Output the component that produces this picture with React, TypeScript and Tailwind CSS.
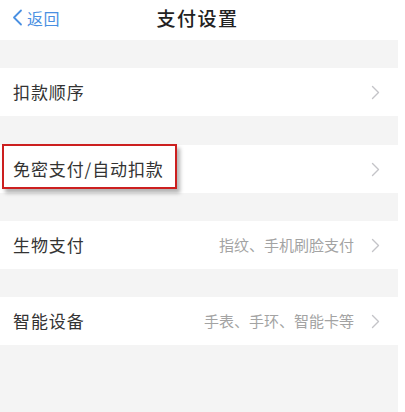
import { ReactNode } from 'react';

function Chevron() {
  return (
    <svg width="9" height="15" viewBox="0 0 9 15" fill="none" className="shrink-0">
      <path d="M1.5 1.5 L7.5 7.5 L1.5 13.5" stroke="#c4c4c8" strokeWidth="1.4" strokeLinecap="round" strokeLinejoin="round" />
    </svg>
  );
}

function Row({ label, value, children }: { label: string; value?: string; children?: ReactNode }) {
  return (
    <div className="relative h-[48px] bg-white flex items-center pl-[13px] pr-[18px]">
      {children}
      <span className="relative text-[17px] text-[#333333] tracking-[0.9px]">{label}</span>
      <div className="ml-auto flex items-center gap-[17px]">
        {value && <span className="text-[15px] text-[#a3a3a3]">{value}</span>}
        <Chevron />
      </div>
    </div>
  );
}

export default function App() {
  return (
    <div
      className="w-[405px] h-[412px] bg-white flex overflow-hidden"
      style={{ fontFamily: '"Noto Sans CJK SC", "Noto Sans", sans-serif' }}
    >
      <div className="w-[398px] h-full bg-[#f4f4f4] flex flex-col">
        {/* header */}
        <div className="relative h-[40px] bg-white flex items-center justify-center">
          <div className="absolute left-[12px] top-[9px] flex items-center gap-[4px] text-[#4a90e2]">
            <svg width="11" height="17" viewBox="0 0 11 17" fill="none">
              <path d="M9 1.5 L2 8.5 L9 15.5" stroke="#4a90e2" strokeWidth="1.8" strokeLinecap="round" strokeLinejoin="round" />
            </svg>
            <span className="text-[16px] leading-none tracking-[0.5px]">返回</span>
          </div>
          <span className="text-[19px] font-medium text-[#222222] tracking-[1.5px] -mt-[3px] -ml-[3px]">支付设置</span>
        </div>

        <div className="h-[28px]" />
        <Row label="扣款顺序" />

        <div className="h-[29px]" />
        <Row label="免密支付/自动扣款">
          <div className="absolute left-[2px] top-[-1px] w-[175px] h-[45px] border-2 border-[#cc1f1f] shadow-[3px_4px_4px_rgba(0,0,0,0.3)]" />
        </Row>

        <div className="h-[28px]" />
        <Row label="生物支付" value="指纹、手机刷脸支付" />

        <div className="h-[28px]" />
        <Row label="智能设备" value="手表、手环、智能卡等" />
      </div>
    </div>
  );
}
